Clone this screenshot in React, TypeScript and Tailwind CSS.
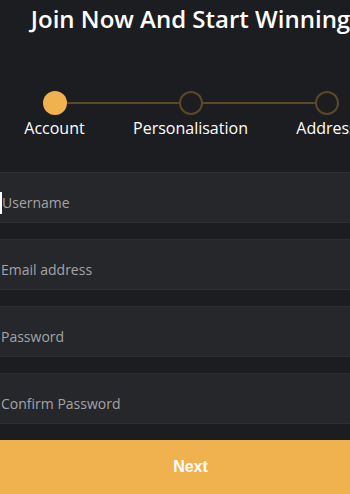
const steps = ["Account", "Personalisation", "Address"];
const fields = ["Username", "Email address", "Password", "Confirm Password"];

function Stepper() {
  return (
    <div className="mt-[55px] flex flex-col items-center">
      <div className="flex w-[296px] items-center">
        <span className="size-6 shrink-0 rounded-full bg-[#efb24f]" />
        <span className="h-[2px] flex-1 bg-[#5a4829]" />
        <span className="size-6 shrink-0 rounded-full border-2 border-[#5a4829]" />
        <span className="h-[2px] flex-1 bg-[#5a4829]" />
        <span className="size-6 shrink-0 rounded-full border-2 border-[#5a4829]" />
      </div>
      <div className="mt-[2px] flex w-[296px] justify-between">
        {steps.map((s) => (
          <div key={s} className="relative flex w-6 justify-center">
            <span className="whitespace-nowrap text-[16px] leading-[22px] text-white">{s}</span>
          </div>
        ))}
      </div>
    </div>
  );
}

export default function App() {
  return (
    <div
      className="h-[494px] w-[350px] overflow-hidden bg-[#1c1d20]"
      style={{ fontFamily: '"Open Sans", "Liberation Sans", sans-serif' }}
    >
      <div className="flex w-[381px] flex-col">
        <h1 className="mt-[2px] text-center text-[24px] font-semibold leading-[34px] text-white">
          Join Now And Start Winning
        </h1>
        <Stepper />
        <div className="mt-[33px] flex flex-col gap-4">
          {fields.map((f, i) => (
            <div
              key={f}
              className="flex h-[51px] items-center border-y border-[#2d2e32] bg-[#26272b] pt-[10px] text-[14px] text-[#a3a4a7]"
            >
              {i === 0 ? <span className="h-[22px] w-[2px] bg-white" /> : null}
              <span className={i === 0 ? "pl-0" : "pl-[1px]"}>{f}</span>
            </div>
          ))}
        </div>
        <button
          type="button"
          className="mt-4 h-[54px] w-full bg-[#efb24f] text-[16px] font-bold text-white"
          style={{ fontFamily: '"Liberation Sans", Arial, sans-serif' }}
        >
          Next
        </button>
      </div>
    </div>
  );
}
